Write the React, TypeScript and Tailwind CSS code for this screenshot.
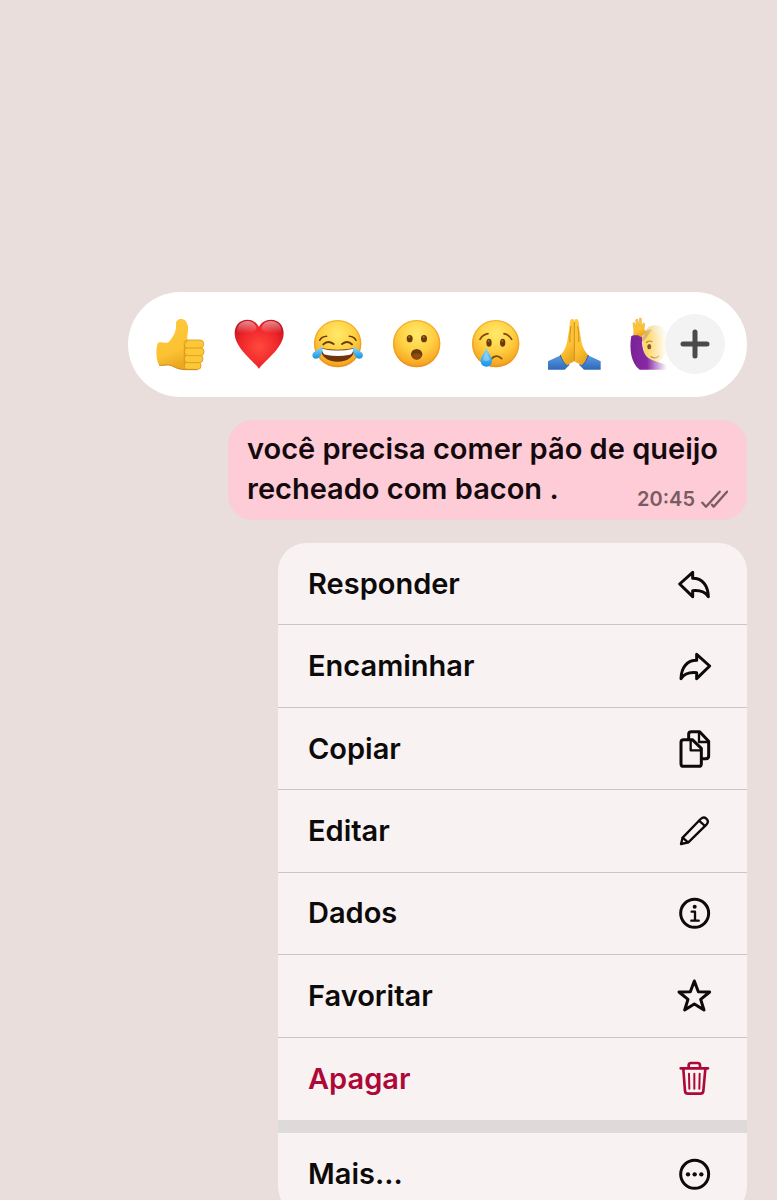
import { clsx } from 'clsx'
import type { ReactNode } from 'react'

type IconProps = { children: ReactNode; strokeWidth?: number }

const Icon = ({ children, strokeWidth = 9 }: IconProps) => (
  <svg
    className="size-9 shrink-0 overflow-visible"
    viewBox="0 0 108 108"
    fill="none"
    stroke="currentColor"
    strokeWidth={strokeWidth}
    strokeLinecap="round"
    strokeLinejoin="round"
    aria-hidden="true"
  >
    {children}
  </svg>
)

const Emoji = ({ children }: { children: ReactNode }) => (
  <svg className="size-[53px] overflow-visible" viewBox="0 0 159 159" aria-hidden="true">
    {children}
  </svg>
)

const Face = ({ children }: { children: ReactNode }) => (
  <Emoji>
    <circle cx="77" cy="77" r="71" fill="url(#face)" />
    <circle cx="77" cy="77" r="69" fill="none" stroke="#e08a12" strokeOpacity="0.45" strokeWidth="4" />
    {children}
  </Emoji>
)

const Gradients = () => (
  <svg className="absolute size-0" aria-hidden="true">
    <defs>
      <radialGradient id="face" cx="0.5" cy="0.3" r="0.72">
        <stop offset="0" stopColor="#ffea6a" />
        <stop offset="0.5" stopColor="#ffd043" />
        <stop offset="0.85" stopColor="#f9ab25" />
        <stop offset="1" stopColor="#ec8f1c" />
      </radialGradient>
      <linearGradient id="skin" x1="0" y1="0" x2="0.3" y2="1">
        <stop offset="0" stopColor="#ffc93c" />
        <stop offset="0.7" stopColor="#fcc233" />
        <stop offset="1" stopColor="#eba722" />
      </linearGradient>
      <radialGradient id="heart" cx="0.5" cy="0.55" r="0.6">
        <stop offset="0" stopColor="#ff4a3c" />
        <stop offset="0.65" stopColor="#f0262a" />
        <stop offset="1" stopColor="#c9141f" />
      </radialGradient>
      <linearGradient id="gloss" x1="0" y1="0" x2="0" y2="1">
        <stop offset="0" stopColor="#fff" stopOpacity="0.5" />
        <stop offset="1" stopColor="#fff" stopOpacity="0" />
      </linearGradient>
      <linearGradient id="tear" x1="0" y1="0" x2="0" y2="1">
        <stop offset="0" stopColor="#8fdcfb" />
        <stop offset="1" stopColor="#1593e6" />
      </linearGradient>
      <linearGradient id="sleeve" x1="0" y1="0" x2="0" y2="1">
        <stop offset="0" stopColor="#5c9be6" />
        <stop offset="1" stopColor="#2f69b8" />
      </linearGradient>
      <linearGradient id="shirt" x1="0" y1="0" x2="1" y2="0">
        <stop offset="0" stopColor="#7a2096" />
        <stop offset="1" stopColor="#9a3bb5" />
      </linearGradient>
    </defs>
  </svg>
)

const ThumbsUp = () => (
  <Emoji>
    <path
      d="M78 3C67 3 62 10 63 22C64 42 54 58 42 71C34 79 16 68 8 76C2 96 3 124 12 141C24 145 38 137 50 143C66 153 84 156 104 155H126V66H98C94 58 102 40 98 22C95 9 88 3 78 3Z"
      fill="url(#skin)"
    />
    <g fill="#fdc837" stroke="#dc981d" strokeWidth="2.5">
      <rect x="88" y="132" width="50" height="22" rx="10" />
      <rect x="88" y="111" width="56" height="23" rx="11" />
      <rect x="88" y="89" width="59" height="24" rx="11" />
      <rect x="87" y="66" width="59" height="24" rx="11" />
    </g>
    <path d="M98 66C94 76 88 76 88 88V140" fill="none" stroke="#dc981d" strokeWidth="2.5" />
    <path d="M12 141C24 145 38 137 50 143C66 153 84 156 104 155H128" fill="none" stroke="#c98a18" strokeWidth="3" />
  </Emoji>
)

const Heart = () => (
  <Emoji>
    <path
      d="M75 153C66 135 2 92 2 46C2 20 19 5 40 5C56 5 69 14 75 27C81 14 94 5 111 5C132 5 149 20 149 46C149 92 84 135 75 153Z"
      fill="url(#heart)"
    />
    <path d="M40 9C56 9 65 19 68 30C64 42 54 46 37 46C17 46 9 44 9 36C11 20 23 9 40 9Z" fill="url(#gloss)" />
    <path d="M111 9C94 9 85 19 82 30C86 42 96 46 114 46C134 46 142 44 142 36C140 20 128 9 111 9Z" fill="url(#gloss)" />
  </Emoji>
)

const Joy = () => (
  <Face>
    <g fill="none" stroke="#6b3a08" strokeLinecap="round">
      <path d="M23 67Q29 56 44 55M112 55Q126 56 132 67" strokeWidth="4.5" />
      <path d="M34 79Q47 66 65 78M90 78Q107 66 120 79" strokeWidth="6" />
    </g>
    <path d="M26 90Q77 101 128 90C128 116 107 131 77 131S26 116 26 90Z" fill="#70340a" />
    <path d="M30 92Q77 103 124 92C124 103 118 110 110 111Q77 117 44 111C36 110 30 103 30 92Z" fill="#fff" />
    <g fill="url(#tear)">
      <path d="M29 85C35 98 27 121 13 122C2 122-2 112 4 104C10 98 23 94 29 85Z" />
      <path d="M125 85C119 98 127 121 141 122C152 122 156 112 150 104C144 98 131 94 125 85Z" />
    </g>
  </Face>
)

const Wow = () => (
  <Face>
    <g fill="#6d3b0a">
      <ellipse cx="56" cy="62" rx="9" ry="11" />
      <ellipse cx="99" cy="62" rx="9" ry="11" />
      <ellipse cx="77" cy="109" rx="17" ry="16" />
    </g>
    <ellipse cx="77" cy="115" rx="13" ry="9" fill="#8d4c12" />
    <g fill="#a87030">
      <circle cx="55" cy="57" r="3" />
      <circle cx="98" cy="57" r="3" />
    </g>
  </Face>
)

const Cry = () => (
  <Face>
    <g fill="none" stroke="#7c470c" strokeWidth="5" strokeLinecap="round">
      <path d="M30 64Q38 50 54 47M102 47Q117 50 125 64" />
      <path d="M62 125Q78 105 95 122" />
    </g>
    <g fill="#6d3b0a">
      <ellipse cx="57" cy="74" rx="8" ry="12" />
      <ellipse cx="98" cy="74" rx="8" ry="12" />
    </g>
    <g fill="#a87030">
      <circle cx="56" cy="69" r="3" />
      <circle cx="97" cy="69" r="3" />
    </g>
    <path d="M49 89C54 104 66 114 66 129C66 140 58 146 49 146S32 140 32 129C32 114 44 104 49 89Z" fill="url(#tear)" />
    <path d="M49 102C52 112 59 118 59 126C54 130 44 130 40 126C40 116 46 111 49 102Z" fill="#fff" fillOpacity="0.3" />
  </Face>
)

const Pray = () => (
  <Emoji>
    <path d="M0 130L38 112L65 140L50 155H0Z" fill="url(#sleeve)" />
    <path d="M158 130L120 112L93 140L108 155H158Z" fill="url(#sleeve)" />
    <path
      d="M76 4C68 0 66 7 65 20C64 36 61 48 59 62C56 84 50 98 37 111C42 126 49 138 56 142C66 134 79 136 79 124V12Q79 6 76 4Z"
      fill="url(#skin)"
    />
    <path
      d="M82 4C90 0 92 7 93 20C94 36 97 48 99 62C102 84 108 98 121 111C116 126 109 138 102 142C92 134 79 136 79 124V12Q79 6 82 4Z"
      fill="url(#skin)"
    />
    <path d="M79 12V130M69 24Q64 58 66 72M89 24Q94 58 92 72" fill="none" stroke="#d18d17" strokeWidth="3" />
    <path d="M37 111C42 126 49 138 56 142M121 111C116 126 109 138 102 142" fill="none" stroke="#2c5fa6" strokeWidth="3" />
  </Emoji>
)

const RaisedHand = () => (
  <Emoji>
    <path d="M46 70C50 44 58 22 84 22C120 20 142 80 130 112H66Z" fill="#f5dc9a" />
    <path d="M48 66C60 60 68 46 74 36C92 56 112 58 124 62C124 100 108 128 88 134C62 128 44 104 48 66Z" fill="#ffd667" />
    <path d="M44 72C58 64 66 48 76 34C60 32 50 44 44 72Z" fill="#dcb468" />
    <path d="M13 54C26 48 42 50 46 56C43 80 48 106 64 120C84 134 120 134 140 155H38C12 136 6 92 13 54Z" fill="url(#shirt)" />
    <path
      d="M20 51C22 36 18 26 18 14L23 15L28 27L26 5L32 3L36 24L38 0L43 1L44 26L49 14L53 17L51 38C56 36 60 38 54 44C50 50 46 51 44 57Q31 48 20 51Z"
      fill="url(#skin)"
      stroke="#e4a82a"
      strokeWidth="1.5"
      strokeLinejoin="round"
    />
    <ellipse cx="67" cy="86" rx="6" ry="8" fill="#704318" />
    <path d="M59 73Q66 66 75 71M72 116Q86 124 96 114" fill="none" stroke="#9c6824" strokeWidth="3.5" strokeLinecap="round" />
  </Emoji>
)

const reactions = [
  { label: 'Joinha', emoji: <ThumbsUp /> },
  { label: 'Coração', emoji: <Heart /> },
  { label: 'Risada', emoji: <Joy /> },
  { label: 'Surpresa', emoji: <Wow /> },
  { label: 'Triste', emoji: <Cry /> },
  { label: 'Obrigado', emoji: <Pray /> },
  { label: 'Mão levantada', emoji: <RaisedHand /> }
]

const replyPath = 'M8 54L47 19V37C76 37 93 58 94 92C84 76 70 72 47 74V92Z'

const actions = [
  {
    label: 'Responder',
    icon: (
      <Icon>
        <path d={replyPath} />
      </Icon>
    )
  },
  {
    label: 'Encaminhar',
    icon: (
      <Icon>
        <path d={replyPath} transform="translate(106 0) scale(-1 1)" />
      </Icon>
    )
  },
  {
    label: 'Copiar',
    icon: (
      <Icon>
        <path d="M20 26H46L73 52V98Q73 106 65 106H20Q12 106 12 98V34Q12 26 20 26Z" />
        <path d="M41 28V58H71" strokeWidth="7" />
        <path d="M35 24V10Q35 2 43 2H68L95 31V75Q95 83 87 83H78" />
        <path d="M66 4V33H93" strokeWidth="7" />
      </Icon>
    )
  },
  {
    label: 'Editar',
    icon: (
      <Icon strokeWidth={7}>
        <path d="M12 93L17 74L71 18Q80 10 88 17Q97 25 89 34L34 88Z" />
        <path d="M66 23L84 39M17 74L33 88" />
      </Icon>
    )
  },
  {
    label: 'Dados',
    icon: (
      <Icon>
        <circle cx="53" cy="55" r="42" />
        <circle cx="53" cy="35" r="6" fill="currentColor" stroke="none" />
        <path d="M44 50H54V76M43 77H65" strokeWidth="7" />
      </Icon>
    )
  },
  {
    label: 'Favoritar',
    icon: (
      <Icon>
        <path d="M52 9L64 41L98 42L71 64L81 96L52 78L23 96L33 64L6 42L40 41Z" />
      </Icon>
    )
  },
  {
    label: 'Apagar',
    danger: true,
    icon: (
      <Icon strokeWidth={8}>
        <path d="M11 22H93M35 21V13Q35 6 42 6H62Q69 6 69 13V21" />
        <path d="M19 24L24 90Q25 98 33 98H70Q78 98 79 90L85 24" />
        <path d="M36 38L37 83M52 38V83M68 38L67 83" strokeWidth="6" />
      </Icon>
    )
  }
]

type ActionProps = { label: string; icon: ReactNode; danger?: boolean; className?: string }

const Action = ({ label, icon, danger, className }: ActionProps) => (
  <button
    type="button"
    className={clsx(
      'flex w-full cursor-pointer items-center justify-between bg-[#f8f2f2] pl-[30px] pr-[34px] text-left',
      danger ? 'text-[#ad0838]' : 'text-[#0d0a0a]',
      className
    )}
  >
    <span className="text-[29px] leading-10">{label}</span>
    {icon}
  </button>
)

export default function App() {
  return (
    <main className="flex h-screen flex-col items-end gap-[23px] overflow-hidden bg-[#e9dedc] px-[30px] pt-[292px] font-['Inter','Liberation_Sans',sans-serif] font-semibold text-[#0d0a0a]">
      <Gradients />
      <section className="relative w-full max-w-[619px] shrink-0 rounded-full bg-white py-[26px] pl-[27px] pr-[67px]">
        <div className="flex justify-between">
          {reactions.map(({ label, emoji }) => (
            <button key={label} type="button" aria-label={label} className="cursor-pointer">
              {emoji}
            </button>
          ))}
        </div>
        <div className="absolute inset-y-0 right-[80px] w-5 bg-linear-to-r from-white/0 to-white" />
        <div className="absolute inset-y-5 right-[52px] w-7 bg-white" />
        <button
          type="button"
          aria-label="Mais reações"
          className="absolute right-[22px] top-[22px] flex size-[60px] cursor-pointer items-center justify-center rounded-full bg-[#f3f3f3] text-[#4b4b4b]"
        >
          <svg className="size-[30px]" viewBox="0 0 30 30" stroke="currentColor" strokeWidth="5" strokeLinecap="round">
            <path d="M15 3V27M3 15H27" />
          </svg>
        </button>
      </section>

      <section className="w-full max-w-[519px] shrink-0 rounded-[24px] border border-[#f3d2d9] bg-[#fdccd7] px-[18px] pb-1.5 pt-2 text-[#140a0d]">
        <p className="text-[29px] leading-10">
          você precisa comer pão de queijo recheado com bacon .
          <span className="float-right mt-4 flex items-center gap-1.5 text-xl leading-7 text-[#7b5a62]">
            <time>20:45</time>
            <svg
              className="h-[18px] w-[27px]"
              viewBox="0 0 81 54"
              fill="none"
              stroke="currentColor"
              strokeWidth="7"
              strokeLinecap="round"
              strokeLinejoin="round"
              aria-label="Entregue"
            >
              <path d="M4 38L15 50L56 5M33 44L38 50L78 5" />
            </svg>
          </span>
        </p>
      </section>

      <nav className="w-full max-w-[469px] shrink-0 overflow-hidden rounded-[28px] bg-[#dedad9]">
        <div className="grid min-h-[577px] auto-rows-fr divide-y divide-[#cbc5c4]">
          {actions.map((action) => (
            <Action key={action.label} {...action} />
          ))}
        </div>
        <Action
          label="Mais..."
          className="mt-[13px] h-[82px]"
          icon={
            <Icon>
              <circle cx="53" cy="55" r="42" />
              <g fill="currentColor" stroke="none">
                <circle cx="33" cy="55" r="6.5" />
                <circle cx="53" cy="55" r="6.5" />
                <circle cx="73" cy="55" r="6.5" />
              </g>
            </Icon>
          }
        />
      </nav>
    </main>
  )
}
